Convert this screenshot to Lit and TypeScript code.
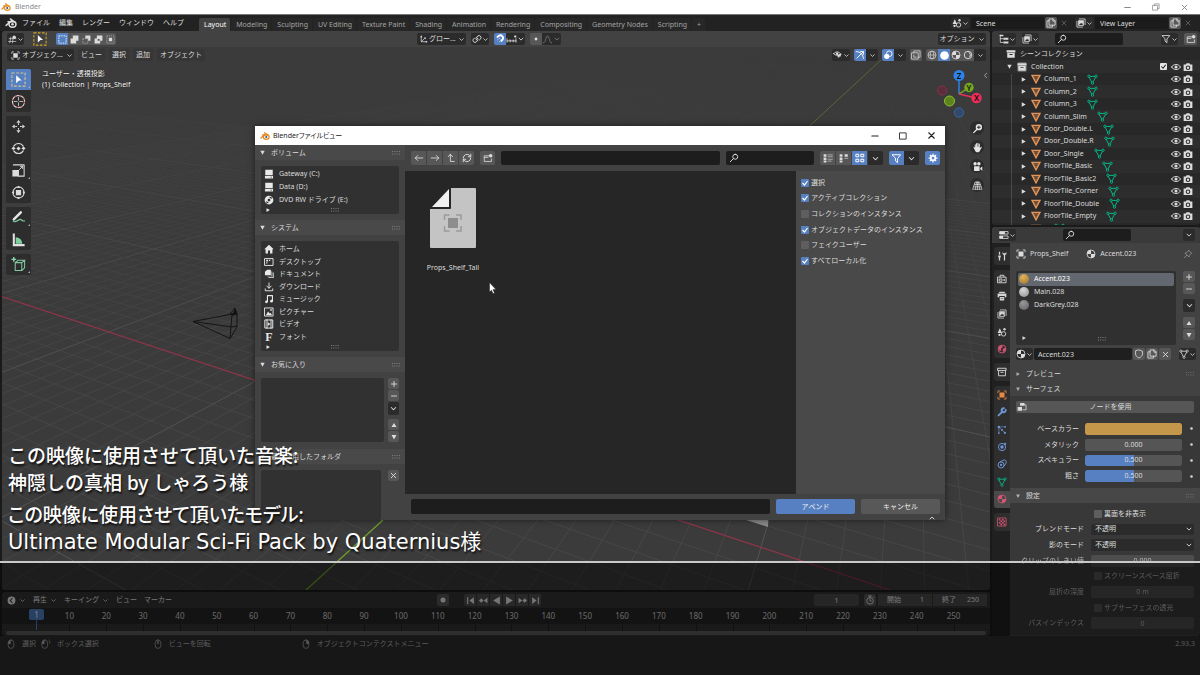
import { LitElement, html, svg, css, nothing } from "lit";
import { customElement } from "lit/decorators.js";
import { classMap } from "lit/directives/class-map.js";

/* ---------- icons, all on a 16 x 16 grid ---------- */
const line = (d: string, w = 1.4) =>
  svg`<path d=${d} fill="none" stroke="currentColor" stroke-width=${w} stroke-linecap="round" stroke-linejoin="round"/>`;
const fill = (d: string) => svg`<path d=${d} fill="currentColor" fill-rule="evenodd"/>`;

const ICONS: Record<string, unknown> = {
  blender: svg`<g fill="none" stroke="currentColor" stroke-width="2" stroke-linecap="round" stroke-linejoin="round"><path d="M1.5 11.2L9 4.8M4 6.2h7M7.2 2.6l5.6 4.2"/><ellipse cx="10" cy="9.6" rx="4.6" ry="3.9"/></g><circle cx="10" cy="9.6" r="1.7" fill="var(--core, currentColor)"/>`,
  chevron: line("M4 6.2l4 4 4-4", 1.8),
  up: line("M4 10l4-4 4 4", 1.8),
  chevLeft: line("M10 4L6 8l4 4", 1.6),
  plus: line("M8 3v10M3 8h10", 1.8),
  minus: line("M3 8h10", 1.8),
  x: line("M4 4l8 8M12 4l-8 8", 1.6),
  restore: line("M3 5.5h7.5V13H3zM5.5 5.5V3H13v7.5h-2.5", 1.2),
  square: line("M3 3h10v10H3z", 1.4),
  left: line("M14 8H2M6 4L2 8l4 4", 1.4),
  right: line("M2 8h12M10 4l4 4-4 4", 1.4),
  parent: line("M3.5 6L7 2l3.5 4M7 2v11.5h6", 1.4),
  refresh: line("M2 8a6 6 0 0 1 10.5-3.8L14 6M14 2v4h-4M14 8a6 6 0 0 1-10.5 3.8L2 10M2 14v-4h4", 1.5),
  newFolder: svg`${line("M9 4.5H2v9h11.5V9.5M2 7h6", 1.3)}<circle cx="12.2" cy="4.2" r="2.8" fill="currentColor"/>`,
  search: line("M10 2a4 4 0 1 1 0 8 4 4 0 0 1 0-8zM7 9l-5 5", 1.5),
  listV: svg`${fill("M1 2h4.5v4H1zM1 7h4.5v4H1zM1 12h4.5v3H1z")}${line("M8 3h7M8 6h7M8 10h7M8 13h5", 1)}`,
  listH: svg`${fill("M1 2h4.5v4H1zM1 7h4.5v4H1zM1 12h4.5v3H1zM9 2h5v4H9z")}${line("M9 8.5h5", 1)}`,
  thumbs: line("M2 2h4v4H2zM10 2h4v4h-4zM2 10h4v4H2zM10 10h4v4h-4z", 1.6),
  funnel: line("M2 2.5h12L9.5 8v6L6.5 11.5V8z", 1.4),
  gear: svg`<circle cx="8" cy="8" r="3.6" fill="none" stroke="currentColor" stroke-width="2.8"/><path d="M8 1v14M1 8h14M3.1 3.1l9.8 9.8M12.9 3.1l-9.8 9.8" stroke="currentColor" stroke-width="2" stroke-dasharray="3 8 3 0"/>`,
  drive: fill("M2 1h12v9H2zM1.5 11h13v4h-13zM10.5 12.3v1.4h2v-1.4z"),
  disc: fill("M8 1a7 7 0 1 1 0 14A7 7 0 0 1 8 1zM8 5.8a2.2 2.2 0 1 0 0 4.4 2.2 2.2 0 0 0 0-4.4zM9 2.3v2.3l3.3 1.5.9-1.6zM7 13.7v-2.3L3.7 9.9l-.9 1.6z"),
  home: fill("M8 1l7.5 7.5H13.5V15H9.7v-4.5H6.3V15H2.5V8.5H.5z"),
  desktop: svg`${line("M1.5 2.5h13v11h-13z", 1.5)}${fill("M3.5 4.5h3v2.5h-3zM8 4.5h2v2H8zM3.5 8.5h2v2h-2z")}`,
  docs: fill("M5 1h6v9H1.500V4.5zM12 3.500h1v8H5V11h7zM14 5.500h1.500V14.500H7V13h7z"),
  download: line("M8 1.5v8M4.5 6.5L8 10l3.5-3.5M2 11v3h12v-3", 1.5),
  music: svg`${line("M5.5 12V2.5h8V11", 1.8)}<circle cx="3.9" cy="12.4" r="2.2" fill="currentColor"/><circle cx="11.9" cy="11.4" r="2.2" fill="currentColor"/>`,
  picture: svg`${line("M1.5 1.5h13v13h-13z", 1.5)}${fill("M3 13l3.5-6 2.5 3.5L10.5 9 13 13zM10 3.5h2.5V6H10z")}`,
  video: svg`${line("M2 1.5h12v13H2zM4.8 1.5v13M11.2 1.5v13", 1.6)}${fill("M6.2 5l4 3-4 3z")}`,
  object: svg`${line("M1.5 4.5v-3h3M11.5 1.5h3v3M14.5 11.5v3h-3M4.5 14.5h-3v-3", 1.3)}${fill("M4 4h8v8H4z")}`,
  tri: svg`<path d="M1.8 2.5h12.4L8 14z" fill="none" stroke="currentColor" stroke-width="2.4"/><path d="M5.5 5h5L8 10z" fill="none" stroke="currentColor" stroke-width=".8"/>`,
  mesh: svg`${line("M3 3.5h10L8 13z", 1.3)}<g fill="#282828" stroke="currentColor" stroke-width="1.2"><circle cx="2.8" cy="3.3" r="1.7"/><circle cx="13.2" cy="3.3" r="1.7"/><circle cx="8" cy="13.3" r="1.7"/></g>`,
  eye: svg`${line("M.8 8C4 2.6 12 2.6 15.2 8 12 13.4 4 13.4.8 8z", 1.6)}<circle cx="8" cy="8" r="2.5" fill="currentColor"/>`,
  camera: fill("M1 4h3.5l1.2-2h4.6l1.2 2H15v10.5H1zM8 5.5a3.7 3.7 0 1 0 0 7.4 3.7 3.7 0 0 0 0-7.4zM8 7.2a2 2 0 1 1 0 4 2 2 0 0 1 0-4z"),
  archive: fill("M1 2h14v3.5H1zM2 6.5h12V14H2zM5.5 8v1.6h5V8z"),
  archiveLine: line("M1.5 2h13v3.5h-13zM2.5 5.5V14h11V5.5M6 8.5h4", 1.5),
  material: svg`<circle cx="8" cy="8" r="6.4" fill="none" stroke="currentColor" stroke-width="1.3"/>${fill("M8 1.6v6.4h6.4A6.4 6.4 0 0 1 8 14.4V8H1.6A6.4 6.4 0 0 1 8 1.6z")}`,
  pin: line("M9 2l5 5-1.5.5-2.5 2.5-.5 3-6.5-6.5 3-.5L8.5 3.5zM6 10l-4 4", 1.2),
  shield: line("M8 1.5l5.5 2v4.5c0 3-2.5 5-5.5 6.5-3-1.5-5.5-3.5-5.5-6.5V3.5z", 1.3),
  copy: line("M5.5 1.5h6l3 3v7h-9zM11 1.5v3.5h3.5M5.5 4.5h-4v10h9v-3", 1.4),
  nodes: svg`${fill("M5 1.5h7V6H5zM1 8h7v6H1z")}${line("M12 4.5h2.5v8H9.5", 1.2)}`,
  tools: fill("M3 1h2v5H3zM2 7h4v2.5L5 11v4H3v-4L2 9.5zM9 1v4l2 1.5V15h2V6.5L15 5V1l-1.5 2.5h-3z"),
  render: svg`${line("M1.5 5h13v9h-13zM5 4.5V2h6v2.5M4 8h4v3.5H4z", 1.5)}${fill("M10.5 8h2v3h-2z")}`,
  printer: fill("M3.5 1h9v2h-9zM1 4h14v6h-2.5V8h-9v2H1zM4.5 9.5h7V15h-7zM6 11v1h4v-1z"),
  images: svg`${line("M5.5 1.500h9V10.500M1.5 5.5v9H10.500", 1.3)}${fill("M3.5 3.5h9V12.5h-9zM5 11h6L9.5 7 8 9.5 7 8z")}`,
  scene: svg`${fill("M4.5 2L8 9.5H1z")}<circle cx="10.5" cy="11" r="3.5" fill="none" stroke="currentColor" stroke-width="1.5"/><circle cx="4" cy="12.5" r="1.9" fill="currentColor"/><circle cx="12" cy="3.5" r="1.9" fill="currentColor"/>`,
  world: svg`<circle cx="8" cy="8" r="6.3" fill="none" stroke="currentColor" stroke-width="1.5"/>${fill("M4 3.5l4-1 1 3-3 1.5 1 3-2.5 1L2.5 7zM10 7l3.5-1v4l-3 3L9 10z")}`,
  wrench: line("M2.5 13.5L9 7M13.8 4.5A3.3 3.3 0 1 1 11 2", 3),
  particles: svg`${line("M3 3L13 13M3 3v10M3 3h10", 1)}<g fill="currentColor"><circle cx="3" cy="3" r="2"/><circle cx="13" cy="3" r="1.3"/><circle cx="3" cy="13" r="1.3"/><circle cx="8" cy="8" r="1.5"/><circle cx="12.5" cy="12.5" r="1.8"/></g>`,
  physics: svg`<circle cx="8" cy="8" r="5.8" fill="none" stroke="currentColor" stroke-width="1.5"/><circle cx="8" cy="8" r="2.7" fill="currentColor"/><circle cx="13" cy="3" r="1.7" fill="currentColor"/>`,
  constraint: svg`<circle cx="6.5" cy="9.5" r="4.8" fill="none" stroke="currentColor" stroke-width="1.6"/><circle cx="6.5" cy="9.5" r="1.8" fill="currentColor"/>${line("M5 4.5L11 1.5a3.5 3.5 0 0 1 3.5 5L11.5 11", 1.5)}`,
  texture: svg`${line("M1.5 1.5h13v13h-13z", 1.3)}${fill("M3 3h2.500v2.500H3zM8 3h2.500v2.500H8zM5.500 5.500H8V8H5.500zM10.500 5.500H13V8h-2.500zM3 8h2.500v2.500H3zM8 8h2.500v2.500H8zM5.500 10.500H8V13H5.500zM10.500 10.500H13V13h-2.500z")}`,
  editor3d: svg`${line("M2 6.5h12M1 11.5h13M5 4L3 14M9 6l-1 8", 1.2)}<circle cx="11" cy="4" r="3" fill="currentColor"/>`,
  dashed: svg`<rect x="1.5" y="1.5" width="13" height="13" fill="none" stroke="currentColor" stroke-width="1.5" stroke-dasharray="2.6 1.6"/>`,
  selTool: svg`<rect x="1" y="1" width="14" height="14" fill="none" stroke="var(--dash, #d8a31f)" stroke-width="1.2" stroke-dasharray="3 1.6"/><path d="M5.500 3.500l6 5.500h-3l-3 3z" fill="#fff"/>`,
  union: fill("M5 1h10v9H11v5H1V6h4z"),
  subtract: svg`${fill("M6 1h9v9h-4V6H6z")}<path d="M1.5 6.5h9v8h-9z" fill="none" stroke="currentColor" stroke-dasharray="2 1.5"/>`,
  invert: fill("M5 1h10v9H11v5H1V6h4zM6.5 7v3H10V7z"),
  intersect: svg`<path d="M1.5 1.5h13v13h-13z" fill="none" stroke="currentColor" stroke-dasharray="2 1.6"/>${fill("M5 5h6v6H5z")}`,
  axes: svg`${line("M4 2v10h10M4 12l6-6", 1.3)}<g fill="currentColor"><path d="M2 4l2-3 2 3zM12 10l3 2-3 2zM8.5 4.5H12V8z"/></g>`,
  link: line("M7 9.5a3.5 3.5 0 0 1 .5-4.5l2-2a3.3 3.3 0 0 1 4.5 4.5l-2 2M9 6.5a3.5 3.5 0 0 1-.5 4.5l-2 2A3.3 3.3 0 0 1 2 8.5l2-2", 1.6),
  magnet: svg`<path d="M3 5.5l3-2.5a4.3 4.3 0 0 1 6 6L9.5 12" fill="none" stroke="currentColor" stroke-width="3"/><path d="M4 9.5l3.5-3 2.5 2.5-3 3.5" fill="none" stroke="currentColor" stroke-width="1.3" stroke-dasharray="2 1.5"/>`,
  increments: svg`${line("M1.5 7v5M6 8.5v3M10.5 8.5v3M14.5 7v5M1.5 10h13", 1.2)}${fill("M12 2h3v3h-3z")}`,
  prop: svg`<circle cx="8" cy="8" r="2.3" fill="currentColor"/>`,
  falloff: line("M2 13c4 0 3-10 6-10s2 10 6 10", 1.3),
  visibility: svg`${line("M1 6C4 2 9 2 12 6 9 9 4 9.5 1 6z", 1.4)}<circle cx="6.5" cy="5.8" r="2" fill="currentColor"/>${fill("M7 8l7-2-3 6-1-2-2 3z")}`,
  gizmo: line("M2 2.5c7 0 11 5 11.5 11M3 13L13 3M9 2.5h4.5V7", 1.5),
  overlays: svg`<circle cx="6" cy="10" r="4.2" fill="currentColor"/><circle cx="10" cy="6" r="4.5" fill="none" stroke="currentColor" stroke-width="1.4"/>`,
  xray: line("M1.5 4.5h10v10h-10zM4.5 4.5v-3h10v10h-3M4.5 8v3.5h4", 1.2),
  wire: svg`<circle cx="8" cy="8" r="6.3" fill="none" stroke="currentColor" stroke-width="1.2"/><ellipse cx="8" cy="8" rx="2.8" ry="6.3" fill="none" stroke="currentColor"/><path d="M2 8h12" stroke="currentColor"/>`,
  ball: svg`<circle cx="8" cy="8" r="6.3" fill="currentColor"/>`,
  rendered: svg`<circle cx="8" cy="8" r="6" fill="none" stroke="currentColor" stroke-width="1.5"/>${line("M10 4a5 5 0 0 1 1 7", 1.6)}`,
  outliner: svg`${line("M2 2v11.5h4M2 7.5h4", 1.3)}${fill("M1 1h6v2.5H1zM7 6h8v3H7zM7 12h8v3H7z")}`,
  properties: svg`${line("M1.5 2.5h13v4h-13zM1.5 9.5h13v4h-13z", 1.3)}${fill("M1.5 2.5h8v4h-8zM1.5 9.5h5v4h-5z")}`,
  clock: svg`${fill("M8 1a7 7 0 1 1 0 14A7 7 0 0 1 8 1zM9 3L4.5 8 9 13l1.3-1.2L7 8l3.3-3.8z")}`,
  stopwatch: line("M8 4a5.3 5.3 0 1 1 0 10.6A5.3 5.3 0 0 1 8 4zM8 6.5V9.5h2M6 1.5h4M8 1.5V4M13 3l1 1", 1.4),
  first: fill("M2 2h2v12H2zM14 2v12L6 8z"),
  prevKey: fill("M8 8l-4-4-4 4 4 4zM15 3v10L8.5 8z"),
  playBack: fill("M14 1v14L2 8z"),
  play: fill("M2 1v14l12-7z"),
  nextKey: fill("M8 8l4-4 4 4-4 4zM1 3v10l6.5-5z"),
  last: fill("M12 2h2v12h-2zM2 2v12l8-6z"),
  mouseL: svg`${line("M8 1.5a4.5 4.5 0 0 1 4.5 4.5v4.5a4.5 4.5 0 0 1-9 0V6A4.5 4.5 0 0 1 8 1.5z", 1.2)}${fill("M7.5 2v6H3.5V6c0-2.5 2-4 4-4z")}`,
  mouseDrag: svg`${line("M6 1.5a4.5 4.5 0 0 1 4.5 4.5v4.5a4.5 4.5 0 0 1-9 0V6A4.5 4.5 0 0 1 6 1.5zM12.500 2c1.500 1 2 2.500 1.500 4.500", 1.2)}${fill("M5.5 2v6H1.5V6c0-2.5 2-4 4-4z")}`,
  mouseM: svg`${line("M8 1.5a4.5 4.5 0 0 1 4.5 4.5v4.5a4.5 4.5 0 0 1-9 0V6A4.5 4.5 0 0 1 8 1.5z", 1.2)}${fill("M7 3h2v5H7z")}`,
  mouseR: svg`${line("M8 1.5a4.5 4.5 0 0 1 4.5 4.5v4.5a4.5 4.5 0 0 1-9 0V6A4.5 4.5 0 0 1 8 1.5z", 1.2)}${fill("M8.5 2v6h4V6c0-2.5-2-4-4-4z")}`,
  arrowR: fill("M4 3l9 5-9 5z"),
  arrowD: fill("M3 4h10L8 13z"),
  arrowU: fill("M3 12h10L8 4z"),
  cursor3d: svg`<circle cx="8" cy="8" r="6.500" fill="none" stroke="#e8e8e8" stroke-width="1.1"/><circle cx="8" cy="8" r="6.500" fill="none" stroke="#c6505a" stroke-width="1.1" stroke-dasharray="2.4 2.7"/><path d="M8 3v4M8 9v4M3 8h4M9 8h4" stroke="#d0d0d0" stroke-width=".9"/>`,
  move: svg`<path d="M8 4.5v2M8 9.5v2M4.5 8h2M9.5 8h2" stroke="currentColor" stroke-width="1.2"/>${fill("M8 1l2.2 3H5.8zM8 15l2.2-3H5.8zM1 8l3-2.2v4.4zM15 8l-3-2.2v4.4z")}`,
  rotate: svg`${line("M3 5.5a5.8 5.8 0 0 1 10 0M3 10.5a5.8 5.8 0 0 0 10 0", 1.2)}${fill("M8 5.8L10.2 8 8 10.2 5.8 8zM.5 8l2-2.2L5 8l-2.5 1.5zM15.5 8l-2-2.2L11 8l2.5 1.5z")}`,
  scale: svg`${line("M2.5 2h11.5v12H8", 1.1)}${line("M9 7l3.5-3.5M10 3.5h2.5V6", 1)}${fill("M1.5 7.5h7v7h-7z")}`,
  transform: svg`<circle cx="8" cy="8" r="6" fill="none" stroke="currentColor" stroke-width="1.1"/>${fill("M5.2 5.2h5.6v5.6H5.2zM8 .8l1.8 2.5H6.2zM8 15.2l1.8-2.5H6.2zM.8 8l2.5-1.8v3.6zM15.2 8l-2.5-1.8v3.6z")}`,
  annotate: svg`<path d="M3 10L10.5 2.5" stroke="#e6e6e6" stroke-width="2.6" stroke-linecap="round"/><path d="M2 11.5c4 3 6-2 8-1.5s2 2.5 5 1.5" fill="none" stroke="#7fc9a2" stroke-width="1.2"/>`,
  measure: svg`<path d="M3 1.5v12.5h11.5" stroke="#e0e0e0" stroke-width="2.2" fill="none"/><path d="M5 5.5a7 7 0 0 1 7 7H5z" fill="#7fd1a0"/>`,
  addCube: svg`<path d="M4.5 6h7v8.5h-7zM4.5 6l3-2.5h7L11.5 6M14.5 3.5v8l-3 3" fill="none" stroke="#7fc9a2" stroke-width="1.1"/><path d="M3 0v5M.5 2.5h5" stroke="#8fd9b0" stroke-width="1.5"/>`,
  zoomIn: svg`${fill("M10 1.5a4.6 4.6 0 1 1 0 9.2 4.6 4.6 0 0 1 0-9.2zM9.3 3.5v2H7.3v1.3h2v2h1.3v-2h2V5.5h-2v-2z")}${line("M7 9.5l-4.5 4.5", 2)}`,
  hand: fill("M4 8.5V4c0-1 1.5-1 1.5 0v3h.4V2.2c0-1 1.5-1 1.5 0V7h.5V1.7c0-1 1.5-1 1.5 0V7h.5V2.8c0-1 1.5-1 1.5 0v6.3l1.4-2c.7-.8 1.8-.1 1.3.8l-2.6 5C10.8 14.7 10 15 8.5 15c-3 0-3.6-1.3-4.5-3.5L2.2 8c-.3-1 .9-1.5 1.8.5z"),
  movie: fill("M4.5 1.5a2.5 2.5 0 1 1 0 5 2.5 2.5 0 0 1 0-5zM10 1.5a2.5 2.5 0 1 1 0 5 2.5 2.5 0 0 1 0-5zM3 7.5h8v7H3zM12 10l3-2v6l-3-2z"),
  persp: line("M5 3h6l3.5 10.5h-13zM4 6.5h8M2.8 10h10.4M8 3v10.5M6.5 3L5 13.5M9.5 3L11 13.5", 1),
  dot: svg`<circle cx="8" cy="8" r="4" fill="currentColor"/>`,
  grip: fill("M0 4h2v2H0zM4.500 4h2v2h-2zM9 4h2v2H9zM13.500 4h2v2h-2zM0 9h2v2H0zM4.500 9h2v2h-2zM9 9h2v2H9zM13.500 9h2v2h-2z"),
};

const icon = (name: string, size = 10) =>
  html`<svg class="ic" width=${size} height=${size} viewBox="0 0 16 16" aria-hidden="true">${ICONS[name]}</svg>`;

/* ---------- shared look ---------- */
const base = css`
  :host {
    display: block;
    color: #dcdcdc;
    font: 7px/10px "Noto Sans", "Noto Sans CJK JP", sans-serif;
  }
  * { box-sizing: border-box; }
  .ic { display: block; flex: none; }
  button, input, select {
    font: inherit;
    color: inherit;
    border: 0;
    padding: 0;
    margin: 0;
    background: none;
    border-radius: 2px;
    min-width: 0;
  }
  button { display: flex; align-items: center; justify-content: center; white-space: nowrap; }
  select { appearance: none; flex: 1; }
  ul { list-style: none; margin: 0; padding: 0; }
  h2 { font: inherit; margin: 0; }
  .row { display: flex; align-items: center; }
  .grow { flex: 1; min-width: 0; }
  .ctl {
    display: flex;
    align-items: center;
    justify-content: center;
    height: 12px;
    background: #2b2b2b;
    border-radius: 2px;
    flex: none;
  }
  .light { background: #575757; }
  .on { background: #5680c2; color: #fff; }
  .group { display: flex; flex: none; border-radius: 2px; overflow: hidden; }
  .group .ctl { border-radius: 0; }
  .search {
    display: flex;
    align-items: center;
    background: #1d1d1d;
    border-radius: 2px;
    height: 12px;
    padding-left: 2px;
  }
  .search input { flex: 1; }
  input[type="checkbox"] {
    appearance: none;
    width: 8px;
    height: 8px;
    background: #5e5e5e;
    border-radius: 1px;
    flex: none;
  }
  input[type="checkbox"]:checked {
    background: #5680c2 url("data:image/svg+xml,%3Csvg xmlns='http://www.w3.org/2000/svg' viewBox='0 0 8 8'%3E%3Cpath d='M1.5 4l2 2 3-4' fill='none' stroke='white' stroke-width='1.2'/%3E%3C/svg%3E");
  }
  .grip { color: #808080; }
`;

/* ---------- 3D viewport ---------- */
const VP_X = [-920, 8];
const VP_Y = [915, 27];

/* Lines of one family meet in a vanishing point and are evenly spaced where they cross y = 520. */
function family(vp: number[], x0: number, step: number, from: number, to: number) {
  const out = [];
  for (let k = from; k <= to; k++) {
    if (k === 0) continue;
    const x = x0 + step * k;
    const t = 3;
    const major = k % 10 === 0;
    out.push(svg`<path d="M${vp[0]} ${vp[1]}L${vp[0] + (x - vp[0]) * t} ${vp[1] + (520 - vp[1]) * t}"
      stroke=${major ? "#555" : "#4a4a4a"} stroke-width=${major ? 1 : 0.8}/>`);
  }
  return out;
}

@customElement("view-port")
class ViewPort extends LitElement {
  static styles = [base, css`
    :host { position: relative; overflow: hidden; background: #3b3b3b; border-radius: 3px; }
    .scene { position: absolute; inset: 0; width: 100%; height: 100%; }
    .over { position: relative; }
    .head { height: 16px; padding: 0 4px 0 5px; background: #424242; }
    .sub { height: 16px; padding: 0 4px 0 5px; gap: 4px; }
    .west { display: flex; align-items: center; flex: 0 0 410px; }
    .editor { width: 17px; margin-right: 8px; }
    .tool { width: 15px; margin-right: 9px; }
    .w12 { width: 12px; }
    .w18 { width: 18px; }
    .mid { display: flex; gap: 5px; flex: 1; }
    .orient { width: 49px; padding: 0 1px 0 2px; gap: 1px; }
    .opt { width: 48px; gap: 3px; }
    .mode { width: 67px; padding: 0 1px 0 4px; gap: 2px; }
    .menu { padding: 0 3px; background: #363636; }
    .right { display: flex; gap: 4px; }
    .off { color: #777; }
    .body { display: flex; gap: 11px; padding: 6px 0 0 4px; align-items: flex-start; }
    .tools { display: flex; flex-direction: column; gap: 4px; }
    .set { display: flex; flex-direction: column; gap: 1px; background: #2d2d2d; border-radius: 2px; overflow: hidden; }
    .set button { width: 25px; height: 21px; border-radius: 0; position: relative; }
    .set .more::after {
      content: "";
      position: absolute;
      right: 1px;
      bottom: 2px;
      border: 1px solid #aaa;
      border-left-color: transparent;
      border-top-color: transparent;
    }
    .on { --dash: #d6c48c; }
    .info { color: #fff; line-height: 11px; margin: -1px 0 0; text-shadow: 0 0 1px #000; }
    .nav {
      position: absolute;
      right: 5px;
      top: 37px;
      display: flex;
      flex-direction: column;
      align-items: flex-end;
    }
    .balls { display: block; width: 50px; height: 52px; }
    .round { display: flex; flex-direction: column; gap: 5px; margin: 1px 1px 0 0; }
    .round button { width: 14px; height: 14px; border-radius: 50%; background: #2c2c2c; color: #e4e4e4; }
    .toggle { position: absolute; right: 0; top: 40px; color: #aaa; }
    .balls text { font-size: 8px; font-weight: 600; fill: #111; text-anchor: middle; }
  `];

  render() {
    const modes = ["dashed", "union", "subtract", "invert", "intersect"];
    const sets = [["selTool", "cursor3d"], ["move", "rotate", "scale", "transform"], ["annotate", "measure"], ["addCube"]];
    const more = ["selTool", "scale", "annotate", "addCube"];
    return html`
      <svg class="scene" viewBox="2 31 988 559" preserveAspectRatio="xMidYMax slice" aria-hidden="true">
        <defs>
          <linearGradient id="fade" x1="0" y1="31" x2="0" y2="590" gradientUnits="userSpaceOnUse">
            <stop offset=".05" stop-color="#fff" stop-opacity="0"/>
            <stop offset=".3" stop-color="#fff" stop-opacity=".35"/>
            <stop offset=".6" stop-color="#fff" stop-opacity=".85"/>
            <stop offset="1" stop-color="#fff"/>
          </linearGradient>
          <mask id="depth" maskUnits="userSpaceOnUse" x="0" y="31" width="992" height="560">
            <rect x="0" y="31" width="992" height="560" fill="url(#fade)"/>
          </mask>
        </defs>
        <g mask="url(#depth)" fill="none">
          ${family(VP_Y, 383, 38.6, -70, 24)}
          ${family(VP_X, 680, 68, -14, 50)}
        </g>
        <path d="M0 296L890 590" stroke="#92344a" stroke-width="1.2"/>
        <path d="M306 590L383 520" stroke="#6d9a2c" stroke-width="1.4"/>
        <path d="M383 520L881 60" stroke="#5c6638"/>
        <path d="M740 518h28v9z" fill="#8a8a8a"/>
        <path d="M193 321.5L232 314l5-1v14l-7 11.500zM193 321.5L232 327l5-1M232 314l-2 24.5M230 314h7L235 308z" fill="none" stroke="#111" stroke-width=".9"/>
        <path d="M232 316l3-8 2 6z" fill="#111"/>
      </svg>

      <header class="row head over">
        <div class="west">
          <button class="ctl editor" aria-label="Editor">${icon("editor3d", 9)}${icon("chevron", 7)}</button>
          <button class="tool" aria-label="Select tool">${icon("selTool", 14)}</button>
          <div class="group">
            ${modes.map((m, i) => html`<button class=${classMap({ ctl: true, w12: true, light: i > 0, on: i === 0 })} aria-label=${m}>${icon(m, 9)}</button>`)}
          </div>
        </div>
        <div class="mid">
          <label class="ctl orient">${icon("axes", 9)}<select aria-label="座標系"><option>グロー...</option></select>${icon("chevron", 7)}</label>
          <button class="ctl w18" aria-label="Pivot">${icon("link", 10)}${icon("chevron", 7)}</button>
          <div class="group">
            <button class="ctl w12 on" aria-label="Snap">${icon("magnet", 10)}</button>
            <button class="ctl" aria-label="Snap to">${icon("increments", 11)}${icon("chevron", 8)}</button>
          </div>
          <div class="group">
            <button class="ctl w12 light" aria-label="Proportional">${icon("prop", 10)}</button>
            <button class="ctl off" aria-label="Falloff">${icon("falloff", 11)}${icon("chevron", 8)}</button>
          </div>
        </div>
        <button class="ctl opt">オプション${icon("chevron", 7)}</button>
      </header>

      <div class="row sub over">
        <label class="ctl mode">${icon("object", 9)}<select aria-label="モード"><option>オブジェク...</option></select>${icon("chevron", 7)}</label>
        ${["ビュー", "選択", "追加", "オブジェクト"].map((m) => html`<button class="ctl menu">${m}</button>`)}
        <span class="grow"></span>
        <div class="right">
          <button class="ctl w18" aria-label="Visibility">${icon("visibility", 10)}${icon("chevron", 7)}</button>
          <div class="group"><button class="ctl w12 on" aria-label="Gizmo">${icon("gizmo", 10)}</button><button class="ctl w12" aria-label="Gizmo menu">${icon("chevron", 7)}</button></div>
          <div class="group"><button class="ctl w12 on" aria-label="Overlays">${icon("overlays", 10)}</button><button class="ctl w12" aria-label="Overlay menu">${icon("chevron", 7)}</button></div>
          <button class="ctl w12 light" aria-label="X-ray">${icon("xray", 10)}</button>
          <div class="group">
            <button class="ctl w12 light" aria-label="Wireframe">${icon("wire", 10)}</button>
            <button class="ctl w12 on" aria-label="Solid">${icon("ball", 11)}</button>
            <button class="ctl w12 light" aria-label="Material preview">${icon("material", 10)}</button>
            <button class="ctl w12 light" aria-label="Rendered">${icon("rendered", 10)}</button>
            <button class="ctl w12" aria-label="Shading menu">${icon("chevron", 7)}</button>
          </div>
        </div>
      </div>

      <div class="body over">
        <div class="tools">
          ${sets.map((s) => html`<div class="set">${s.map((t) => html`
            <button class=${classMap({ on: t === "selTool", more: more.includes(t) })} aria-label=${t}>${icon(t, 15)}</button>`)}</div>`)}
        </div>
        <p class="info">ユーザー・透視投影<br />(1) Collection | Props_Shelf</p>
      </div>

      <div class="nav">
        <svg class="balls" viewBox="935 68 50 52" aria-label="Navigation">
          <path d="M959 94V76" stroke="#2e83e6" stroke-width="1.5"/>
          <path d="M959 94l10-6.5" stroke="#6d9b1c" stroke-width="1.5"/>
          <path d="M959 94l17 4" stroke="#e8305a" stroke-width="1.5"/>
          <circle cx="942" cy="90.5" r="4.5" fill="#5b2e3b" stroke="#8a3049"/>
          <circle cx="959" cy="112.5" r="4.7" fill="#34496a" stroke="#3566a3"/>
          <circle cx="949.5" cy="101" r="5" fill="#5f8220" stroke="#8bc42a"/>
          <circle cx="969" cy="87.5" r="4.7" fill="#75a81f"/>
          <circle cx="976.5" cy="98" r="5.2" fill="#f02c59"/>
          <circle cx="959" cy="75.5" r="5.5" fill="#2e83e6"/>
          <text x="959" y="78.5">Z</text><text x="969" y="90.5">Y</text><text x="976.5" y="101">X</text>
        </svg>
        <div class="round">
          ${["zoomIn", "hand", "movie", "persp"].map((n) => html`<button aria-label=${n}>${icon(n, 11)}</button>`)}
        </div>
      </div>
      <button class="toggle" aria-label="Sidebar">${icon("chevLeft", 9)}</button>
    `;
  }
}

/* ---------- timeline ---------- */
@customElement("time-line")
class TimeLine extends LitElement {
  static styles = [base, css`
    :host { position: relative; background: #343434; border-radius: 3px; overflow: hidden; }
    .head { height: 16px; padding: 0 3px 0 5px; color: #ececec; }
    .west { display: flex; align-items: center; flex: 0 0 430px; gap: 7px; }
    .dd { display: flex; align-items: center; gap: 3px; }
    .rec { width: 12px; margin-right: 15px; }
    .play .ctl { width: 12px; margin-right: 1px; background: #505050; }
    .num { background: #4c4c4c; height: 12px; text-align: center; width: 45px; margin-right: 5px; }
    .clock { width: 12px; margin-right: 1px; }
    .range { display: flex; align-items: center; background: #4c4c4c; height: 12px; width: 54px; padding: 0 8px 0 9px; margin-left: 1px; white-space: nowrap; }
    .range input { width: 16px; margin-left: auto; text-align: right; }
    .ruler { display: grid; grid-template-columns: repeat(25, 1fr); height: 16px; padding: 0 18px 0 49px; background: #272727; color: #d0d0d0; font-size: 8px; align-items: center; text-align: center; }
    .ticks { display: grid; grid-template-columns: repeat(25, 1fr); height: 7px; padding: 0 18px 0 49px; background: #343434; }
    .ticks i { border-left: 1px solid #222; margin-left: 50%; }
    .scroll { height: 4px; margin: 0 4px; background: #5c5c5c; border-radius: 2px; }
    .now { position: absolute; left: 27px; top: 17px; width: 15px; height: 11px; background: #4f80c9; border-radius: 2px; color: #fff; font-size: 8px; line-height: 11px; text-align: center; }
    .now::after { content: ""; position: absolute; left: 7px; top: 11px; width: 1px; height: 10px; background: #4f80c9; }
  `];

  render() {
    const frames = Array.from({ length: 25 }, (_, i) => (i + 1) * 10);
    return html`
      <header class="row head">
        <div class="west">
          <button class="dd" aria-label="Editor">${icon("clock", 9)}${icon("chevron", 7)}</button>
          <button class="dd">再生${icon("chevron", 7)}</button>
          <button class="dd">キーイング${icon("chevron", 7)}</button>
          <button>ビュー</button>
          <button>マーカー</button>
        </div>
        <button class="ctl light rec" aria-label="Record">${icon("dot", 10)}</button>
        <div class="group play">
          ${["first", "prevKey", "playBack", "play", "nextKey", "last"].map((n) => html`<button class="ctl" aria-label=${n}>${icon(n, 9)}</button>`)}
        </div>
        <span class="grow"></span>
        <input class="num" aria-label="現在のフレーム" value="1" />
        <button class="ctl light clock" aria-label="Preview range">${icon("stopwatch", 10)}</button>
        <label class="range">開始<input value="1" /></label>
        <label class="range">終了<input value="250" /></label>
      </header>
      <div class="ruler">${frames.map((f) => html`<span>${f}</span>`)}</div>
      <div class="ticks">${frames.map(() => html`<i></i>`)}</div>
      <div class="scroll"></div>
      <div class="now">1</div>
    `;
  }
}

/* ---------- outliner ---------- */
@customElement("scene-outliner")
class SceneOutliner extends LitElement {
  static styles = [base, css`
    :host { background: #282828; border-radius: 3px; overflow: hidden; }
    .head { height: 16px; padding: 0 3px 0 7px; background: #3a3a3a; gap: 6px; margin-bottom: 1px; }
    .w17 { width: 17px; }
    .search { width: 68px; margin-left: 10px; }
    .new { width: 13px; height: 12px; }
    .tree { display: grid; grid-auto-rows: minmax(0, 1fr); height: 187px; background: linear-gradient(#484848, #484848) 19px 26px / 1px 100% no-repeat; }
    .tree li { display: flex; align-items: center; gap: 2px; padding: 0 7px 0 14px; }
    .tree li:nth-child(even) { background: #ffffff07; }
    .tree .deep { padding-left: 28px; }
    .name { margin: 0 2px; }
    .tree .deep .name { margin: 0 8px 0 1px; }
    .tri { color: #e59457; }
    .data { color: #00c892; }
    .box { background: #5c5c5c; border-radius: 2px; }
    .tree input[type="checkbox"]:checked {
      background: #e6e6e6 url("data:image/svg+xml,%3Csvg xmlns='http://www.w3.org/2000/svg' viewBox='0 0 8 8'%3E%3Cpath d='M1.5 4l2 2 3-4' fill='none' stroke='%23222' stroke-width='1.2'/%3E%3C/svg%3E");
      width: 7px;
      height: 7px;
      margin-right: 2px;
    }
  `];

  render() {
    const names = ["Column_1", "Column_2", "Column_3", "Column_Slim", "Door_Double.L", "Door_Double.R", "Door_Single",
      "FloorTile_Basic", "FloorTile_Basic2", "FloorTile_Corner", "FloorTile_Double", "FloorTile_Empty", ""];
    return html`
      <header class="row head">
        <button class="ctl w17" aria-label="Editor">${icon("outliner", 10)}${icon("chevron", 7)}</button>
        <button class="ctl w17" aria-label="Display mode">${icon("images", 10)}${icon("chevron", 7)}</button>
        <label class="search">${icon("search", 10)}<input aria-label="検索" /></label>
        <span class="grow"></span>
        <button class="ctl w17" aria-label="Filter">${icon("funnel", 10)}${icon("chevron", 7)}</button>
        <button class="ctl light new" aria-label="New collection">${icon("newFolder", 10)}</button>
      </header>
      <ul class="tree">
        <li>${icon("archive", 10)}<span class="name">シーンコレクション</span></li>
        <li>${icon("arrowD", 7)}<span></span><span class="box">${icon("archive", 10)}</span><span class="name">Collection</span><span class="grow"></span>
          <input type="checkbox" checked aria-label="Collection" />${icon("eye", 10)}${icon("camera", 10)}</li>
        ${names.map((n) => html`<li class="deep">${icon("arrowR", 7)}<span></span><span class="tri">${icon("tri", 10)}</span><span class="name">${n}</span>
          <span class="data">${icon("mesh", 11)}</span><span class="grow"></span>${icon("eye", 10)}${icon("camera", 10)}</li>`)}
      </ul>
    `;
  }
}

/* ---------- material properties ---------- */
@customElement("material-properties")
class MaterialProperties extends LitElement {
  static styles = [base, css`
    :host { background: #424242; border-radius: 3px; overflow: hidden; display: flex; flex-direction: column; }
    .head { height: 16px; padding: 0 5px 0 7px; background: #3a3a3a; flex: none; }
    .w17 { width: 17px; }
    .w12 { width: 12px; }
    .head .search { width: 68px; margin-left: 47px; }
    .main { display: flex; flex: 1; min-height: 0; }
    .tabs { width: 18px; background: #202020; display: flex; flex-direction: column; gap: 5px; padding: 4px 0 0 2px; }
    .tabs div { display: grid; grid-auto-rows: 1fr; height: 18px; background: #2e2e2e; border-radius: 3px 0 0 3px; overflow: hidden; }
    .tabs .five { height: 88px; }
    .tabs .seven { height: 122px; }
    .tabs button { border-radius: 0; width: 16px; color: #d4d4d4; }
    .tabs .active { background: #4a4a4a; }
    .tabs .pink { color: #d65475; }
    .tabs .orange { color: #e58a45; }
    .tabs .blue { color: #6f97d6; }
    .tabs .green { color: #00c892; }
    .content { flex: 1; min-width: 0; }
    .crumb { display: flex; align-items: center; gap: 4px; height: 22px; padding: 0 7px 0 6px; }
    .crumb .mat { margin-left: 14px; }
    .pin { margin-left: auto; color: #999; }
    .slots { display: flex; gap: 7px; padding: 6px 5px 0 6px; }
    .list { flex: 1; background: #303030; border-radius: 2px; height: 74px; padding: 2px; display: flex; flex-direction: column; }
    .list ul { display: grid; grid-auto-rows: 1fr; height: 38px; }
    .list li { display: flex; align-items: center; gap: 5px; border-radius: 2px; padding-left: 1px; }
    .list .sel { background: #63676f; color: #fff; }
    .ball { width: 10px; height: 10px; border-radius: 50%; }
    .gold { background: radial-gradient(circle at 40% 30%, #e0b35c, #9a7028); }
    .silver { background: radial-gradient(circle at 40% 30%, #d8d8d8, #8a8a8a); }
    .grey { background: radial-gradient(circle at 40% 30%, #989898, #606060); }
    .foot { display: flex; justify-content: space-between; margin-top: auto; padding: 0 68px 0 3px; }
    .side { display: flex; flex-direction: column; gap: 1px; width: 12px; }
    .side .ctl { height: 11px; }
    .side .gap { margin: 4px 0; height: 13px; }
    .id { display: flex; align-items: center; gap: 1px; padding: 3px 4px 0 6px; }
    .id .name { flex: 1; background: #1f1f1f; height: 12px; padding-left: 4px; }
    .id .last { margin-left: 7px; }
    .panel { display: flex; align-items: center; gap: 5px; height: 15px; padding: 0 6px 0 5px; }
    .panel .ic { opacity: .7; }
    .panel .grip { margin-left: auto; }
    .first { margin-top: 6px; }
    .lift { background: #474747; }
    .sheet { background: #383838; padding: 5px 6px 6px; }
    .use { background: #565656; width: 100%; height: 12px; position: relative; padding-left: 11px; }
    .use .ic { position: absolute; left: 1px; }
    .form { display: grid; grid-auto-rows: 1fr; gap: 4px; }
    .surface { height: 59px; margin-top: 10px; }
    .settings { height: 121px; }
    .field { display: grid; grid-template-columns: 63px 1fr 6px; gap: 6px; align-items: stretch; }
    .field.wide { grid-template-columns: 68px 1fr; gap: 7px; }
    .field > label:first-child { text-align: right; align-self: center; white-space: nowrap; }
    .field .dot { align-self: center; justify-self: center; }
    .value { background: #555; text-align: center; width: 100%; min-height: 0; height: 100%; }
    .field input[type="color"] { appearance: none; width: 100%; height: 100%; overflow: hidden; }
    input[type="color"]::-webkit-color-swatch-wrapper { padding: 0; }
    input[type="color"]::-webkit-color-swatch { border: 0; border-radius: 2px; }
    .slider { display: grid; border-radius: 2px; overflow: hidden; }
    .slider > * { grid-area: 1 / 1; }
    .slider input { appearance: none; width: 100%; height: 100%; background: linear-gradient(90deg, #5680c2 var(--v), #555 var(--v)); }
    .slider input::-webkit-slider-thumb { appearance: none; width: 1px; }
    .slider output { text-align: center; align-self: center; pointer-events: none; }
    .pick { display: flex; align-items: center; background: #2b2b2b; border-radius: 2px; padding: 0 1px 0 4px; }
    .field .check { display: flex; align-items: center; gap: 2px; grid-column: 2; padding-left: 3px; white-space: nowrap; }
    .dim { opacity: .75; }
  `];

  render() {
    const groups: [string, string][][] = [
      [["tools", ""]],
      [["render", ""], ["printer", ""], ["images", ""], ["scene", ""], ["world", "pink"]],
      [["archiveLine", ""]],
      [["object", "orange"], ["wrench", "blue"], ["particles", "blue"], ["physics", "blue"], ["constraint", "blue"], ["mesh", "green"], ["material", "pink active"]],
      [["texture", "pink"]],
    ];
    const slots = [["Accent.023", "gold"], ["Main.028", "silver"], ["DarkGrey.028", "grey"]];
    const dot = html`<span class="dot">${icon("dot", 5)}</span>`;
    const slide = (id: string, label: string, v: number) => html`
      <div class="field"><label for=${id}>${label}</label>
        <span class="slider"><input id=${id} type="range" min="0" max="1" step="0.001" .value=${String(v)} style="--v:${v * 100}%" /><output>${v.toFixed(3)}</output></span>${dot}</div>`;
    const pick = (id: string, label: string) => html`
      <div class="field wide"><label for=${id}>${label}</label>
        <span class="pick"><select id=${id}><option>不透明</option></select>${icon("chevron", 8)}</span></div>`;
    const num = (id: string, label: string, v: string) => html`
      <div class="field wide dim"><label for=${id}>${label}</label><input class="value" id=${id} value=${v} /></div>`;
    return html`
      <header class="row head">
        <button class="ctl w17" aria-label="Editor">${icon("properties", 10)}${icon("chevron", 7)}</button>
        <label class="search">${icon("search", 10)}<input aria-label="検索" /></label>
        <span class="grow"></span>
        <button class="ctl w12" aria-label="Options">${icon("chevron", 8)}</button>
      </header>
      <div class="main">
        <nav class="tabs">
          ${groups.map((g) => html`<div class=${classMap({ five: g.length === 5, seven: g.length === 7 })}>
            ${g.map(([n, c]) => html`<button class=${c} aria-label=${n}>${icon(n, 10)}</button>`)}</div>`)}
        </nav>
        <div class="content">
          <div class="crumb">${icon("object", 10)}<span>Props_Shelf</span><span class="mat">${icon("material", 10)}</span><span>Accent.023</span><span class="pin">${icon("pin", 10)}</span></div>
          <div class="slots">
            <div class="list">
              <ul>${slots.map(([n, c], i) => html`<li class=${i === 0 ? "sel" : ""}><span class="ball ${c}"></span>${n}</li>`)}</ul>
              <div class="foot">${icon("arrowR", 6)}<span class="grip">${icon("grip", 8)}</span></div>
            </div>
            <div class="side">
              <button class="ctl light" aria-label="Add">${icon("plus", 8)}</button>
              <button class="ctl light" aria-label="Remove">${icon("minus", 8)}</button>
              <button class="ctl gap" aria-label="Menu">${icon("chevron", 9)}</button>
              <button class="ctl light" aria-label="Up">${icon("arrowU", 8)}</button>
              <button class="ctl light" aria-label="Down">${icon("arrowD", 8)}</button>
            </div>
          </div>
          <div class="id">
            <button class="ctl w17" aria-label="Browse">${icon("material", 10)}${icon("chevron", 7)}</button>
            <input class="name" aria-label="マテリアル名" value="Accent.023" />
            <button class="ctl light w12" aria-label="Fake user">${icon("shield", 10)}</button>
            <button class="ctl light w12" aria-label="Copy">${icon("copy", 10)}</button>
            <button class="ctl light w12" aria-label="Unlink">${icon("x", 9)}</button>
            <button class="ctl w17 last" aria-label="Link">${icon("mesh", 10)}${icon("chevron", 7)}</button>
          </div>
          <h2 class="panel first">${icon("arrowR", 6)}プレビュー<span class="grip">${icon("grip", 8)}</span></h2>
          <h2 class="panel">${icon("arrowD", 6)}サーフェス</h2>
          <div class="sheet">
            <button class="use">${icon("nodes", 10)}ノードを使用</button>
            <div class="form surface">
              <div class="field"><label for="base">ベースカラー</label><input id="base" type="color" value="#c5974a" />${dot}</div>
              <div class="field"><label for="metal">メタリック</label><input class="value" id="metal" value="0.000" />${dot}</div>
              ${slide("spec", "スペキュラー", 0.5)}
              ${slide("rough", "粗さ", 0.5)}
            </div>
          </div>
          <h2 class="panel lift">${icon("arrowD", 6)}設定<span class="grip">${icon("grip", 8)}</span></h2>
          <div class="sheet">
            <div class="form settings">
              <div class="field wide"><label class="check"><input type="checkbox" />裏面を非表示</label></div>
              ${pick("blend", "ブレンドモード")}
              ${pick("shadow", "影のモード")}
              ${num("clip", "クリップのしきい値", "0.000")}
              <div class="field wide dim"><label class="check"><input type="checkbox" />スクリーンスペース屈折</label></div>
              ${num("depth", "屈折の深度", "0 m")}
              <div class="field wide dim"><label class="check"><input type="checkbox" />サブサーフェスの透光</label></div>
              ${num("pass", "パスインデックス", "0")}
            </div>
          </div>
        </div>
      </div>
    `;
  }
}

/* ---------- file browser window ---------- */
@customElement("file-browser")
class FileBrowser extends LitElement {
  static styles = [base, css`
    :host { display: flex; flex-direction: column; background: #424242; box-shadow: 0 0 6px #0008; }
    .title { height: 19px; flex: none; background: #fff; color: #222; padding: 0 8px 0 5px; gap: 3px; font-feature-settings: "palt"; }
    .logo { color: #e8851c; --core: #265787; }
    .win { display: flex; gap: 18px; }
    .win button { color: #222; }
    .body { display: flex; flex: 1; min-height: 0; }
    .side { width: 150px; flex: none; overflow: hidden; display: flex; flex-direction: column; }
    .panel { display: flex; align-items: center; gap: 5px; height: 15px; padding: 0 5px 0 4px; background: #494949; flex: none; }
    .panel .grip { margin-left: auto; }
    .list { background: #313131; border-radius: 2px; margin: 6px; padding: 2px 3px 0; flex: none; }
    .list ul { display: grid; grid-auto-rows: 1fr; height: 38px; }
    .list .eight { height: 100px; }
    .list li { display: flex; align-items: center; gap: 5px; white-space: nowrap; }
    .list .ic { color: #e8e8e8; }
    .list .grip .ic { color: #808080; }
    .serif { width: 10px; font: bold 12px/12px "Liberation Serif", serif; text-align: center; color: #e8e8e8; }
    .foot { display: flex; justify-content: space-between; align-items: center; height: 8px; padding: 0 57px 0 1px; }
    .marks { display: flex; gap: 4px; padding: 6px 6px 7px; }
    .blank { flex: 1; background: #313131; border-radius: 2px; }
    .recent { flex: 1; padding-bottom: 0; gap: 7px; }
    .stack { display: flex; flex-direction: column; gap: 1px; width: 11px; }
    .stack .ctl { height: 11px; }
    .stack .gap { height: 13px; margin-bottom: 3px; }
    .main { flex: 1; min-width: 0; display: flex; flex-direction: column; }
    .bar { display: flex; gap: 6px; padding: 6px 5px 6px 6px; }
    .bar .ctl, .bar .search { height: 14px; }
    .bar .path { flex: 1; background: #1d1d1d; }
    .bar .search { width: 88px; padding-left: 3px; }
    .w15 { width: 15px; }
    .sep { gap: 1px; }
    .mid { display: flex; flex: 1; min-height: 0; }
    .files { flex: 1; background: #262626; padding: 17px 15px; }
    .file { display: flex; flex-direction: column; align-items: center; width: 66px; gap: 14px; }
    .file svg { display: block; }
    .opts { width: 149px; background: #494949; padding: 6px 5px; }
    .checks { display: grid; grid-auto-rows: 1fr; gap: 4px; height: 90px; }
    .checks label { display: flex; align-items: center; gap: 2px; white-space: nowrap; }
    .end { display: flex; gap: 6px; padding: 5px 5px 6px 6px; position: relative; }
    .end input { flex: 1; background: #1d1d1d; height: 15px; }
    .end button { width: 79px; height: 15px; background: #585858; color: #eee; }
    .end .on { background: #5680c2; }
    .tip { position: absolute; right: 9px; bottom: -2px; }
  `];

  private list(items: [string, string][], big = false) {
    return html`<div class="list">
      <ul class=${big ? "eight" : ""}>${items.map(([i, t]) => html`<li>${i === "F" ? html`<span class="serif">F</span>` : icon(i, 10)}${t}</li>`)}</ul>
      <div class="foot">${icon("arrowR", 6)}<span class="grip">${icon("grip", 8)}</span></div>
    </div>`;
  }

  render() {
    const head = (t: string) => html`<h2 class="panel">${icon("arrowD", 7)}${t}<span class="grip">${icon("grip", 8)}</span></h2>`;
    const checks: [string, boolean][] = [["選択", true], ["アクティブコレクション", true], ["コレクションのインスタンス", false],
      ["オブジェクトデータのインスタンス", true], ["フェイクユーザー", false], ["すべてローカル化", true]];
    return html`
      <header class="row title"><span class="logo">${icon("blender", 10)}</span>Blenderファイルビュー<span class="grow"></span>
        <div class="win"><button aria-label="Minimize">${icon("minus", 10)}</button><button aria-label="Maximize">${icon("square", 10)}</button><button aria-label="Close">${icon("x", 11)}</button></div>
      </header>
      <div class="body">
        <aside class="side">
          ${head("ボリューム")}
          ${this.list([["drive", "Gateway (C:)"], ["drive", "Data (D:)"], ["disc", "DVD RW ドライブ (E:)"]])}
          ${head("システム")}
          ${this.list([["home", "ホーム"], ["desktop", "デスクトップ"], ["docs", "ドキュメント"], ["download", "ダウンロード"],
            ["music", "ミュージック"], ["picture", "ピクチャー"], ["video", "ビデオ"], ["F", "フォント"]], true)}
          ${head("お気に入り")}
          <div class="marks"><div class="blank"></div>
            <div class="stack">
              <button class="ctl light" aria-label="Add">${icon("plus", 8)}</button>
              <button class="ctl light" aria-label="Remove">${icon("minus", 8)}</button>
              <button class="ctl gap" aria-label="Menu">${icon("chevron", 9)}</button>
              <button class="ctl light" aria-label="Up">${icon("arrowU", 8)}</button>
              <button class="ctl light" aria-label="Down">${icon("arrowD", 8)}</button>
            </div>
          </div>
          ${head("最近使用したフォルダ")}
          <div class="marks recent"><div class="blank"></div>
            <div class="stack"><button class="ctl light" aria-label="Clear">${icon("x", 9)}</button></div>
          </div>
        </aside>
        <div class="main">
          <div class="bar">
            <div class="group sep">${["left", "right", "parent", "refresh"].map((n) => html`<button class="ctl light w15" aria-label=${n}>${icon(n, 10)}</button>`)}</div>
            <button class="ctl light w15" aria-label="New folder">${icon("newFolder", 10)}</button>
            <input class="path" aria-label="パス" />
            <label class="search">${icon("search", 10)}<input aria-label="検索" /></label>
            <div class="group sep">
              <button class="ctl light w15" aria-label="Vertical list">${icon("listV", 10)}</button>
              <button class="ctl light w15" aria-label="Horizontal list">${icon("listH", 10)}</button>
              <button class="ctl on w15" aria-label="Thumbnails">${icon("thumbs", 10)}</button>
              <button class="ctl w15" aria-label="Display settings">${icon("chevron", 9)}</button>
            </div>
            <div class="group">
              <button class="ctl on w15" aria-label="Filter">${icon("funnel", 11)}</button>
              <button class="ctl w15" aria-label="Filter settings">${icon("chevron", 9)}</button>
            </div>
            <button class="ctl on w15" aria-label="Options">${icon("gear", 10)}</button>
          </div>
          <div class="mid">
            <div class="files">
              <div class="file">
                <svg width="46" height="61" viewBox="0 0 46 61" aria-hidden="true">
                  <path d="M21 0h24a1 1 0 0 1 1 1v58a1 1 0 0 1-1 1H1a1 1 0 0 1-1-1V21h20a1 1 0 0 0 1-1z" fill="#c4c4c4"/>
                  <path d="M19 1v18H2z" fill="#f0f0f0"/>
                  <path d="M14.5 32v-5h5M26 27h5v5M31 38v5h-5M19.5 43h-5v-5" fill="none" stroke="#9a9a9a" stroke-width="1.5"/>
                  <path d="M18 30h10v10H18z" fill="#8d8d8d"/>
                </svg>
                <span>Props_Shelf_Tall</span>
              </div>
            </div>
            <div class="opts"><div class="checks">
              ${checks.map(([t, c]) => html`<label><input type="checkbox" ?checked=${c} />${t}</label>`)}
            </div></div>
          </div>
          <div class="end">
            <input aria-label="ファイル名" />
            <button class="on">アペンド</button>
            <button>キャンセル</button>
            <span class="tip">${icon("up", 8)}</span>
          </div>
        </div>
      </div>
    `;
  }
}

/* ---------- application ---------- */
@customElement("app-root")
class AppRoot extends LitElement {
  static styles = [base, css`
    :host { display: flex; flex-direction: column; position: relative; height: 100vh; overflow: hidden; background: #1a1a1a; }
    .title { height: 15px; flex: none; background: #fff; color: #888; padding: 0 11px 0 1px; gap: 4px; border-bottom: 1px solid #777; }
    .logo { color: #e8902c; --core: #265787; }
    .win { display: flex; gap: 19px; }
    .top { height: 16px; flex: none; background: #222; padding: 0 6px 0 5px; color: #ddd; gap: 5px; }
    .menus { display: flex; align-items: center; gap: 9px; }
    .tabs { display: flex; align-self: flex-end; margin-left: 10px; }
    .tabs button { height: 13px; padding: 0 4px 0 5px; color: #a4a4a4; background: #272727; border-radius: 2px 2px 0 0; border-right: 1px solid #222; }
    .tabs .cur { background: #424242; color: #fff; }
    .pick { display: flex; align-items: center; gap: 1px; }
    .dd { width: 19px; }
    .name { width: 73px; height: 12px; background: #1b1b1b; padding-left: 5px; }
    .b { width: 12px; }
    .off { color: #666; background: none; }
    .work { flex: 1; min-height: 0; display: flex; gap: 2px; padding-left: 2px; }
    .left { flex: 1; min-width: 0; display: flex; flex-direction: column; gap: 2px; }
    .right { width: 208px; flex: none; display: flex; flex-direction: column; gap: 2px; }
    view-port { flex: 1; }
    time-line { height: 44px; }
    scene-outliner { height: 194px; flex: none; }
    material-properties { flex: 1; min-height: 0; }
    .status { height: 39px; flex: none; display: flex; align-items: flex-start; padding: 3px 5px 0 6px; background: #2e2e2e; color: #b4b4b4; }
    .hint { display: flex; align-items: center; gap: 6px; margin-right: 5px; }
    .far { margin-right: 54px; }
    .farther { margin-right: 90px; }
    .version { margin-left: auto; }
    file-browser { position: absolute; left: 255px; top: 126px; width: 690px; height: 394px; }
    .pointer { position: absolute; left: 489px; top: 282px; }
    .credits { position: absolute; left: 0; right: 0; bottom: 0; pointer-events: none; }
    .credits p {
      margin: 0 0 5px 8px;
      color: #fff;
      font: 500 19px/27px "Noto Sans", "Noto Sans CJK JP", sans-serif;
      text-shadow: 1px 2px 2px #000c;
      white-space: nowrap;
    }
    .credits .tight { font-feature-settings: "palt"; }
    .credits .roman { display: block; font: 21px/27px "DejaVu Sans", "Noto Sans CJK JP", sans-serif; }
    .shade { height: 114px; border-top: 2px solid #c9c9c9; background: #00000080; }
  `];

  render() {
    const tabs = ["Layout", "Modeling", "Sculpting", "UV Editing", "Texture Paint", "Shading", "Animation", "Rendering", "Compositing", "Geometry Nodes", "Scripting", "+"];
    const pick = (ic: string, name: string) => html`<div class="pick">
      <button class="ctl dd" aria-label=${name}>${icon(ic, 10)}${icon("chevron", 7)}</button>
      <input class="name" aria-label=${name} value=${name} />
      <button class="ctl light b" aria-label="New">${icon("copy", 10)}</button>
      <button class="ctl off b" aria-label="Remove">${icon("x", 8)}</button></div>`;
    return html`
      <header class="row title"><span class="logo">${icon("blender", 10)}</span>Blender<span class="grow"></span>
        <div class="win"><button aria-label="Minimize">${icon("minus", 9)}</button><button aria-label="Restore">${icon("restore", 10)}</button><button aria-label="Close">${icon("x", 9)}</button></div>
      </header>
      <nav class="row top">
        ${icon("blender", 12)}
        <div class="menus">
          ${["ファイル", "編集", "レンダー", "ウィンドウ", "ヘルプ"].map((m) => html`<button>${m}</button>`)}
        </div>
        <div class="tabs">${tabs.map((t, i) => html`<button class=${i === 0 ? "cur" : nothing}>${t}</button>`)}</div>
        <span class="grow"></span>
        ${pick("scene", "Scene")}${pick("images", "View Layer")}
      </nav>
      <main class="work">
        <div class="left"><view-port></view-port><time-line></time-line></div>
        <div class="right"><scene-outliner></scene-outliner><material-properties></material-properties></div>
      </main>
      <footer class="status">
        <span class="hint">${icon("mouseL", 10)}選択</span>
        <span class="hint far">${icon("mouseDrag", 10)}ボックス選択</span>
        <span class="hint farther">${icon("mouseM", 10)}ビューを回転</span>
        <span class="hint">${icon("mouseR", 10)}オブジェクトコンテクストメニュー</span>
        <span class="version">2.93.3</span>
      </footer>
      <file-browser></file-browser>
      <svg class="pointer" width="8" height="13" viewBox="0 0 8 13" aria-hidden="true"><path d="M.5.5v9.5l2-1.8 1.5 3.5 1.5-.7L4 7.6h3z" fill="#fff" stroke="#222" stroke-width=".5"/></svg>
      <section class="credits">
        <p>この映像に使用させて頂いた音楽:<br />神隠しの真相 by しゃろう様</p>
        <p class="tight">この映像に使用させて頂いたモデル:<span class="roman">Ultimate Modular Sci-Fi Pack by Quaternius様</span></p>
        <div class="shade"></div>
      </section>
    `;
  }
}
